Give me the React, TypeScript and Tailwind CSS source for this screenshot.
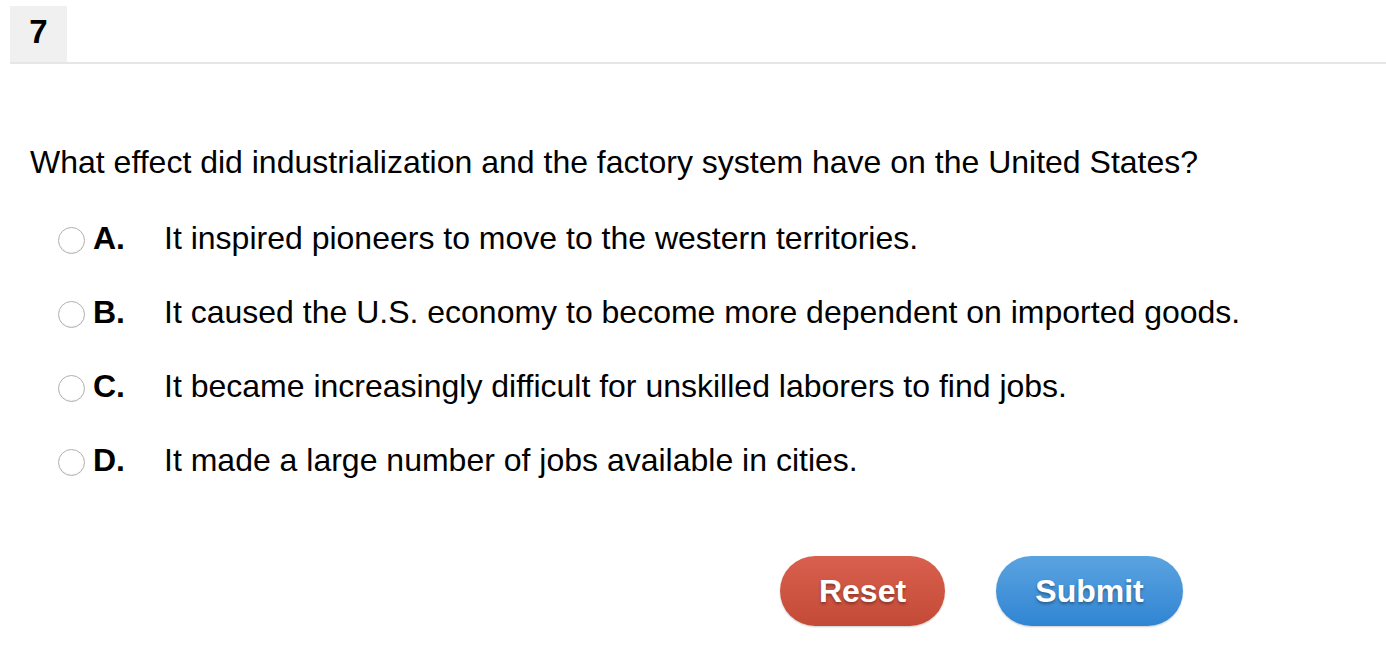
export default function App() {
    const options = [
        { letter: 'A.', text: 'It inspired pioneers to move to the western territories.' },
        { letter: 'B.', text: 'It caused the U.S. economy to become more dependent on imported goods.' },
        { letter: 'C.', text: 'It became increasingly difficult for unskilled laborers to find jobs.' },
        { letter: 'D.', text: 'It made a large number of jobs available in cities.' },
    ];

    return (
        <div className="w-[1386px] h-[652px] bg-white text-black font-['Liberation_Sans',Arial,sans-serif]">
            <div className="pt-[6px] pl-[10px]">
                <div className="flex border-b-2 border-[#e6e6e6]">
                    <div className="w-[57px] h-[56px] bg-[#f0f0f0] flex items-center justify-center pb-[4px] text-[33px] font-bold">
                        7
                    </div>
                </div>
            </div>

            <div className="pl-[30px] pt-[80px] text-[32px] leading-[36px]">
                What effect did industrialization and the factory system have on the United States?
            </div>

            <div className="flex flex-col gap-[38px] pt-[40px] pl-[58px]">
                {options.map((o) => (
                    <label key={o.letter} className="flex items-center h-[36px] text-[32px]">
                        <span className="w-[27px] h-[27px] rounded-full border border-[#b0b0b0] bg-white shadow-[inset_0_-1px_1px_rgba(0,0,0,0.06)] mt-[4px]" />
                        <span className="w-[79px] pl-[8px] font-bold">{o.letter}</span>
                        <span>{o.text}</span>
                    </label>
                ))}
            </div>

            <div className="flex gap-[51px] pl-[780px] pt-[78px]">
                <button className="w-[165px] h-[70px] rounded-full bg-gradient-to-b from-[#d9604e] to-[#c34a36] text-white text-[32px] font-bold [text-shadow:0_2px_3px_rgba(0,0,0,0.35)] shadow-[0_1px_2px_rgba(0,0,0,0.2)]">
                    Reset
                </button>
                <button className="w-[187px] h-[70px] rounded-full bg-gradient-to-b from-[#5aa3e0] to-[#2f85d3] text-white text-[32px] font-bold [text-shadow:0_2px_3px_rgba(0,0,0,0.35)] shadow-[0_1px_2px_rgba(0,0,0,0.2)]">
                    Submit
                </button>
            </div>
        </div>
    );
}
